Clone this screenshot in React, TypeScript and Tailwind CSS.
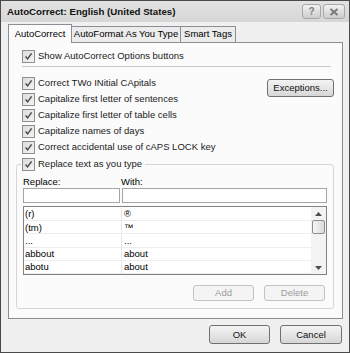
import React from "react";

const font = { fontFamily: "'Liberation Sans', Arial, sans-serif" };

function Check({ label }: { label: string }) {
  return (
    <div className="flex items-center h-[16px] gap-[3px] whitespace-nowrap">
      <div className="w-[13px] h-[13px] border border-[#8e8f8f] bg-gradient-to-br from-[#dcdcdc] to-[#f4f4f4] flex items-center justify-center shrink-0">
        <svg width="9" height="9" viewBox="0 0 9 9">
          <path d="M1.6 4.6 L3.6 6.9 L7.6 1.4" stroke="#4a4a4a" strokeWidth="1.5" fill="none" />
        </svg>
      </div>
      <span className="text-[9.5px] text-[#1a1a1a] leading-none">{label}</span>
    </div>
  );
}

function Btn({ label, disabled, cls }: { label: string; disabled?: boolean; cls: string }) {
  return (
    <div
      className={`${cls} flex items-center justify-center rounded-[3px] border text-[9.5px] leading-none shrink-0 ${
        disabled
          ? "border-[#c2c2c2] text-[#9c9c9c] bg-[#f4f4f4]"
          : "border-[#707070] text-[#111] bg-gradient-to-b from-[#f3f3f3] via-[#e6e6e6] to-[#d6d6d6]"
      }`}
    >
      {label}
    </div>
  );
}

const rows = [
  ["(r)", "®"],
  ["(tm)", "™"],
  ["...", "..."],
  ["abbout", "about"],
  ["abotu", "about"],
];

export default function App() {
  return (
    <div style={font} className="w-[350px] h-[353px] bg-[#f0f0f0] border border-[#4a4a4a] flex flex-col">
      {/* title bar */}
      <div className="h-[21px] shrink-0 flex items-center justify-between pl-[6px] pr-[4px] bg-gradient-to-b from-[#e2e2e2] to-[#d6d6d6]">
        <span className="text-[9.7px] font-bold text-[#111] leading-none whitespace-nowrap">AutoCorrect: English (United States)</span>
        <div className="flex gap-[2px]">
          <div className="w-[19px] h-[15px] rounded-[3px] border border-[#a8a8a8] bg-gradient-to-b from-[#f2f2f2] to-[#cdcdcd] flex items-center justify-center text-[10px] text-[#808080] font-bold leading-none">?</div>
          <div className="w-[22px] h-[15px] rounded-[3px] border border-[#a8a8a8] bg-gradient-to-b from-[#f2f2f2] to-[#cdcdcd] flex items-center justify-center">
            <svg width="10" height="8" viewBox="0 0 10 8">
              <path d="M1.5 1 L8.5 7 M8.5 1 L1.5 7" stroke="#7a7a7a" strokeWidth="2" />
            </svg>
          </div>
        </div>
      </div>
      <div className="pl-[7px] pr-[6px] pt-[2px] flex-1 flex flex-col">
        {/* tabs */}
        <div className="flex items-end h-[18px] shrink-0">
          <div className="w-[64px] h-[19px] border border-b-0 border-[#8c8e94] bg-[#fbfbfb] text-[9.5px] flex items-center justify-center relative top-[1px] z-10 whitespace-nowrap">AutoCorrect</div>
          <div className="w-[109px] h-[16px] border border-b-0 border-l-0 border-[#8c8e94] bg-[#ececec] text-[9.5px] flex items-center justify-center whitespace-nowrap">AutoFormat As You Type</div>
          <div className="w-[55px] h-[16px] border border-b-0 border-l-0 border-[#8c8e94] bg-[#ececec] text-[9.5px] flex items-center justify-center whitespace-nowrap">Smart Tags</div>
        </div>
        {/* panel */}
        <div className="h-[277px] shrink-0 border border-[#8c8e94] bg-[#fbfbfb] pl-[13px] pr-[8px] pt-[5px] flex flex-col">
          <Check label="Show AutoCorrect Options buttons" />
          <div className="h-px bg-[#c9c9c9] mt-[2px] mr-[3px] shrink-0" />
          <div className="flex justify-between mt-[8px]">
            <div className="flex flex-col">
              <Check label="Correct TWo INitial CApitals" />
              <Check label="Capitalize first letter of sentences" />
              <Check label="Capitalize first letter of table cells" />
              <Check label="Capitalize names of days" />
              <Check label="Correct accidental use of cAPS LOCK key" />
            </div>
            <Btn label="Exceptions..." cls="w-[67px] h-[18px] mt-[4px]" />
          </div>
          {/* group */}
          <div className="relative mt-[9px] -ml-[6px] h-[145px] border border-[#d5d5d5] rounded-[3px] pl-[6px] pr-[6px] shrink-0">
            <div className="absolute -top-[9px] left-[4px] bg-[#fbfbfb] pr-[3px] pl-[1px]">
              <Check label="Replace text as you type" />
            </div>
            <div className="flex text-[9.5px] mt-[11px] h-[12px] items-center leading-none">
              <span className="w-[98px]">Replace:</span>
              <span>With:</span>
            </div>
            <div className="flex gap-[2px]">
              <div className="w-[97px] h-[15px] border border-[#a5a5a5] bg-white" />
              <div className="flex-1 h-[15px] border border-[#a5a5a5] bg-white" />
            </div>
            <div className="mt-[3px] h-[69px] border border-[#828282] bg-white flex">
              <div className="flex-1 flex flex-col pt-[1px]">
                {rows.map(([a, b], i) => (
                  <div key={i} className="h-[13.5px] flex text-[9.5px] leading-none border-b border-[#ececec]">
                    <div className="w-[98px] pl-[1px] flex items-center border-r border-[#e6e6e6]">{a}</div>
                    <div className="pl-[2px] flex items-center">{b}</div>
                  </div>
                ))}
              </div>
              <div className="w-[15px] bg-[#f3f3f3] flex flex-col items-center">
                <div className="h-[13px] flex items-center justify-center">
                  <svg width="7" height="4" viewBox="0 0 7 4"><path d="M0 4 L3.5 0 L7 4Z" fill="#4d4d4d" /></svg>
                </div>
                <div className="w-[13px] h-[14px] rounded-[2px] border border-[#8d8d8d] bg-gradient-to-r from-[#f6f6f6] to-[#dadada]" />
                <div className="flex-1" />
                <div className="h-[13px] flex items-center justify-center">
                  <svg width="7" height="4" viewBox="0 0 7 4"><path d="M0 0 L3.5 4 L7 0Z" fill="#4d4d4d" /></svg>
                </div>
              </div>
            </div>
            <div className="flex justify-end gap-[10px] mt-[10px] pr-[2px]">
              <Btn label="Add" disabled cls="w-[61px] h-[16px]" />
              <Btn label="Delete" disabled cls="w-[61px] h-[16px]" />
            </div>
          </div>
        </div>
        {/* footer */}
        <div className="flex justify-end gap-[10px] mt-[6px] pr-[1px]">
          <Btn label="OK" cls="w-[61px] h-[19px]" />
          <Btn label="Cancel" cls="w-[62px] h-[19px]" />
        </div>
      </div>
    </div>
  );
}
